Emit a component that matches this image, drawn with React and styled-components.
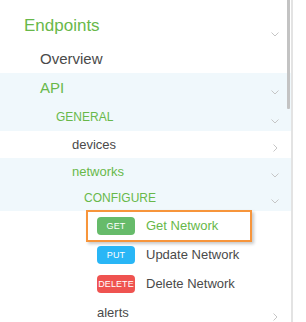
import React from "react";
import styled, { createGlobalStyle } from "styled-components";

const GlobalStyle = createGlobalStyle`
  html, body { margin: 0; padding: 0; background: #fff; }
  body { font-family: "Liberation Sans", Arial, sans-serif; }
`;

const GREEN = "#68b84a";
const TEXT = "#4a4a4a";
const TINT = "#f0f8fc";

const Page = styled.div`
  width: 306px;
  height: 322px;
  overflow: hidden;
  background: #fff;
`;

const Nav = styled.nav`
  position: relative;
  width: 291px;
  height: 322px;
  border-right: 2px solid #e3e3e3;
  display: flex;
  flex-direction: column;
`;

const Thumb = styled.div`
  position: absolute;
  top: 0;
  left: 287px;
  width: 3px;
  height: 109px;
  background: #c3c3c3;
  border-radius: 0 0 1px 1px;
`;

const Row = styled.div`
  flex: none;
  display: flex;
  align-items: ${(p) => (p.$top ? "flex-start" : "center")};
  height: ${(p) => p.$h || 29}px;
  padding-left: ${(p) => p.$indent}px;
  padding-right: 12px;
  padding-top: ${(p) => p.$pt || 0}px;
  box-sizing: border-box;
  background: ${(p) => (p.$tint ? TINT : "transparent")};
`;

const Label = styled.span`
  flex: 1;
  font-size: ${(p) => p.$size || 13}px;
  line-height: 20px;
  color: ${(p) => (p.$active ? GREEN : TEXT)};
  text-transform: ${(p) => (p.$caps ? "uppercase" : "none")};
  white-space: nowrap;
`;

const Caret = styled.span`
  align-self: flex-end;
  margin-bottom: 6px;
  width: 8px;
  height: 8px;
  display: flex;
  align-items: center;
  justify-content: center;
  svg { display: block; }
`;

const Method = styled.div`
  display: flex;
  align-items: center;
  gap: 11px;
  ${(p) =>
    p.$selected &&
    `
    margin-left: -11px;
    height: 32px;
    width: 166px;
    box-sizing: border-box;
    padding-left: 9px;
    border: 2px solid #f7953b;
    box-shadow: 2px 2px 3px rgba(0, 0, 0, 0.22);
    background: #fff;
  `}
`;

const Badge = styled.span`
  width: 38px;
  height: 18px;
  border-radius: 4px;
  background: ${(p) => p.$color};
  color: #fff;
  font-size: 9px;
  display: flex;
  align-items: center;
  justify-content: center;
  letter-spacing: 0.1px;
`;

const Down = () => (
  <svg width="8" height="5" viewBox="0 0 8 5">
    <path d="M0.5 0.5 L4 4 L7.5 0.5" fill="none" stroke="#c6c6c6" strokeWidth="1" />
  </svg>
);

const Right = () => (
  <svg width="5" height="8" viewBox="0 0 5 8">
    <path d="M0.5 0.5 L4 4 L0.5 7.5" fill="none" stroke="#c6c6c6" strokeWidth="1" />
  </svg>
);

const methods = [
  { verb: "GET", color: "#66bb6a", name: "Get Network", selected: true },
  { verb: "PUT", color: "#29b6f6", name: "Update Network" },
  { verb: "DELETE", color: "#ef5350", name: "Delete Network" },
];

export default function App() {
  return (
    <Page>
      <GlobalStyle />
      <Nav>
        <Row $h={44} $indent={24} $top $pt={16}>
          <Label $size={17} $active>Endpoints</Label>
          <Caret><Down /></Caret>
        </Row>
        <Row $indent={40}>
          <Label $size={15}>Overview</Label>
        </Row>
        <Row $indent={40} $tint>
          <Label $size={15} $active>API</Label>
          <Caret><Down /></Caret>
        </Row>
        <Row $indent={56} $tint>
          <Label $size={12} $caps $active>General</Label>
          <Caret><Down /></Caret>
        </Row>
        <Row $h={27} $indent={72}>
          <Label>devices</Label>
          <Caret><Right /></Caret>
        </Row>
        <Row $h={27} $indent={72} $tint>
          <Label $active>networks</Label>
          <Caret><Down /></Caret>
        </Row>
        <Row $h={26} $indent={84} $tint>
          <Label $size={12} $caps $active>Configure</Label>
          <Caret><Down /></Caret>
        </Row>
        {methods.map((m) => (
          <Row key={m.verb} $indent={97}>
            <Method $selected={m.selected}>
              <Badge $color={m.color}>{m.verb}</Badge>
              <Label $active={m.selected}>{m.name}</Label>
            </Method>
          </Row>
        ))}
        <Row $indent={97}>
          <Label>alerts</Label>
          <Caret><Right /></Caret>
        </Row>
        <Thumb />
      </Nav>
    </Page>
  );
}
